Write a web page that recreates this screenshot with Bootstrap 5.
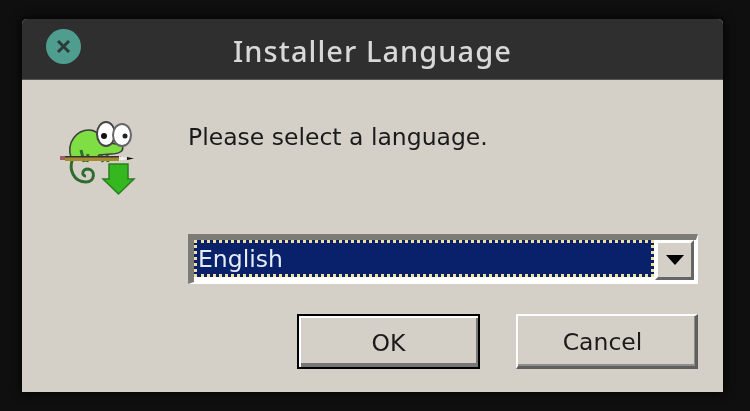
<!DOCTYPE html>
<html lang="en"><head><meta charset="utf-8"><title>Installer Language</title>
<link href="https://cdn.jsdelivr.net/npm/bootstrap@5.3.0/dist/css/bootstrap.min.css" rel="stylesheet">
<style>
html,body{height:100%;overflow:hidden}
body{background:#0f0f0f;padding:19px 27px 19px 22px;font-family:"DejaVu Sans",sans-serif}
.win{width:701px;height:373px;background:#d4d0c8;border-radius:5px 5px 0 0;overflow:hidden;box-shadow:0 0 12px #000}
.tbar{height:61px;background:#2f2f2f;border-bottom:1px solid #555;padding-left:24px;position:relative}
.closer{width:35px;height:35px;border-radius:50%;background:#4f9d8f;margin-top:-6px;filter:blur(.5px)}
.ttl{position:absolute;left:0;right:0;top:13px;text-align:center;color:#d8d8d8;font:500 29px/38px "Noto Sans",sans-serif;letter-spacing:1.05px;filter:blur(.4px)}
.wbody{padding:0 25px 0 35px;flex:1}
.logo{width:80px;height:78px;margin-top:40px;filter:blur(.6px);flex:none}
.msg{font-size:23.500px;line-height:30px;color:#1a1a1a;margin:42px 0 0 51px;filter:blur(.4px)}
.combo{margin:36px 0 0 131px;height:50px;width:510px;border:solid;border-width:6px 2px 2px 6px;border-color:#7d7b76 #fff #fff #7d7b76;background:#fff;filter:blur(.35px)}
.sel{flex:1;height:37px;background:#08216a;color:#e6ecf6;border:3px dotted #efe0a0;font-size:23.500px;line-height:32px;padding:0 0 0 1px;margin-right:1px}
.arrow{width:39px;height:40px;margin-right:2px;background:#d4d0c8;border:solid;border-width:3px;border-color:#fff #666 #666 #fff}
.tri{width:0;height:0;border:solid transparent;border-width:10px 9px 0;border-top-color:#000}
.nbtn{width:182px;height:55px;border-radius:0;background:#d4d0c8;color:#1a1a1a;font-size:23.500px;line-height:30px;padding:2px 0 0;border:solid;border-width:2px 3px 3px 2px;border-color:#fff #5f5f5f #5f5f5f #fff;box-shadow:inset -1px -2px 0 #8f8d88;filter:blur(.35px)}
.nbtn.dflt{border-color:#000;border-width:2px;box-shadow:inset 2px 2px 0 #fff,inset -2px -4px 0 #777;width:183px}
.foot{gap:36px;margin:30px 0 0 240px}
</style></head>
<body>
<div class="win d-flex flex-column">
  <div class="tbar d-flex align-items-center">
    <div class="closer d-flex align-items-center justify-content-center">
      <svg width="17" height="17" viewBox="0 0 17 17"><path d="M3 3L14 14M14 3L3 14" stroke="#2d3a3a" stroke-width="3"/></svg>
    </div>
    <div class="ttl">Installer Language</div>
  </div>
  <div class="wbody d-flex flex-column">
    <div class="d-flex">
      <svg class="logo" viewBox="0 0 80 78">
        <path d="M16 38C11 50 17 62 29 62C38 62 39 50 31 49C25 49 24 56 29 56" fill="none" stroke="#2f6b2f" stroke-width="3"/>
        <path d="M14 38C9 22 20 10 32 10C42 10 46 20 53 23L65 25C68 31 62 34 54 34L42 35L40 38Z" fill="#7ede43" stroke="#3c3c3c" stroke-width="1.500"/>
        <path d="M24 30L27 42M31 34L30 42M44 35L46 42M50 35L51 42" stroke="#2f6b2f" stroke-width="3"/>
        <ellipse cx="49" cy="14" rx="9" ry="12" fill="#fff" stroke="#444" stroke-width="2"/>
        <ellipse cx="65" cy="15" rx="9" ry="11" fill="#fff" stroke="#666" stroke-width="2"/>
        <circle cx="47" cy="16" r="3" fill="#111"/><circle cx="68" cy="16" r="2.500" fill="#222"/>
        <rect x="3" y="36" width="5" height="4" fill="#a0606a"/>
        <rect x="8" y="37" width="56" height="4" fill="#a58a2e"/><rect x="8" y="36" width="56" height="1.500" fill="#333"/>
        <path d="M62 36L72 38.500L62 41Z" fill="#eee"/><path d="M70 37L77 38.500L70 40Z" fill="#111"/>
        <path d="M52 44H71V59H77L61.500 74L46 59H52Z" fill="#35b81f" stroke="#2b7d22" stroke-width="1.500"/>
      </svg>
      <p class="msg mb-0">Please select a language.</p>
    </div>
    <div class="combo d-flex align-items-start"><div class="sel">English</div><div class="arrow d-flex align-items-center justify-content-center"><div class="tri"></div></div></div>
    <div class="foot d-flex">
      <button type="button" class="btn nbtn dflt">OK</button>
      <button type="button" class="btn nbtn pe-2">Cancel</button>
    </div>
  </div>
</div>
<script src="https://cdn.jsdelivr.net/npm/bootstrap@5.3.0/dist/js/bootstrap.bundle.min.js"></script>
</body></html>
